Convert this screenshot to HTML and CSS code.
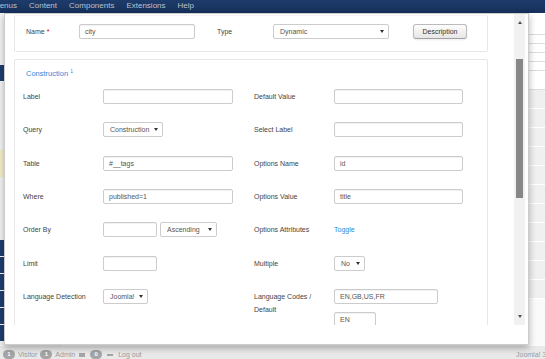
FILE: index.html
```html
<!DOCTYPE html>
<html>
<head>
	<title>Custom Field</title>
	<link rel="stylesheet" href="styles.css">
</head>
<body>
	<div class="topbar">
		<nav class="menu">
			<span>Menus</span>
			<span>Content</span>
			<span>Components</span>
			<span>Extensions</span>
			<span>Help</span>
		</nav>
	</div>

	<div class="page">
		<aside class="sidebar">
			<div class="side light h52"></div>
			<div class="side navy h17"></div>
			<div class="side light h68"></div>
			<div class="side yellow h27"></div>
			<div class="side light h63"></div>
			<div class="side navy h17"></div>
			<div class="side navy h17"></div>
			<div class="side navy h17"></div>
			<div class="side navy h17"></div>
			<div class="side navy h17"></div>
			<div class="side navy h17"></div>
		</aside>
		<main class="main">
			<div class="main-head"></div>
			<div class="thin-row"></div>
			<div class="thin-row"></div>
			<div class="thin-row"></div>
			<div class="thin-row"></div>
			<div class="thin-row tall"></div>
			<div class="list-row"></div>
			<div class="list-row"></div>
			<div class="list-row"></div>
			<div class="list-row"></div>
			<div class="list-row"></div>
			<div class="list-row"></div>
			<div class="list-row"></div>
			<div class="list-row"></div>
			<div class="list-row"></div>
			<div class="list-row"></div>
			<div class="list-row"></div>
		</main>
	</div>

	<footer class="status">
		<div class="status-left">
			<span class="badge">1</span><span>Visitor</span>
			<span class="badge">1</span><span>Admin</span>
			<span class="mail"></span>
			<span class="badge">0</span>
			<span class="dash"></span>
			<span>Log out</span>
		</div>
		<div class="status-right">Joomla! 3.4.8 — © 2016 Site</div>
	</footer>

	<div class="modal">
		<div class="frame">
			<div class="scroller">
				<div class="box box-head">
					<label class="head-label name-label">Name <span class="star">*</span></label>
					<div class="input w116">city</div>
					<label class="head-label type-label">Type</label>
					<div class="select w116"><span>Dynamic</span><i class="caret"></i></div>
					<button class="btn">Description</button>
				</div>

				<div class="box box-main">
					<div class="legend">Construction <sup>1</sup></div>
					<div class="fields">
						<label>Label</label>
						<div><div class="input w130"></div></div>
						<label>Default Value</label>
						<div><div class="input w129"></div></div>

						<label>Query</label>
						<div><div class="select w60"><span>Construction</span><i class="caret"></i></div></div>
						<label>Select Label</label>
						<div><div class="input w129"></div></div>

						<label>Table</label>
						<div><div class="input w130">#__tags</div></div>
						<label>Options Name</label>
						<div><div class="input w129">id</div></div>

						<label>Where</label>
						<div><div class="input w130">published=1</div></div>
						<label>Options Value</label>
						<div><div class="input w129">title</div></div>

						<label>Order By</label>
						<div class="inline">
							<div class="input w54"></div>
							<div class="select w57"><span>Ascending</span><i class="caret"></i></div>
						</div>
						<label>Options Attributes</label>
						<div><a class="toggle">Toggle</a></div>

						<label>Limit</label>
						<div><div class="input w54"></div></div>
						<label>Multiple</label>
						<div><div class="select w31"><span>No</span><i class="caret"></i></div></div>

						<label>Language Detection</label>
						<div><div class="select w45"><span>Joomla!</span><i class="caret"></i></div></div>
						<label>Language Codes /<br>Default</label>
						<div class="stack">
							<div class="input w104">EN,GB,US,FR</div>
							<div class="input w42">EN</div>
						</div>
					</div>
				</div>
			</div>

			<div class="scrollbar">
				<div class="sb-btn"><i class="arrow up"></i></div>
				<div class="sb-track"><div class="sb-thumb"></div></div>
				<div class="sb-btn"><i class="arrow down"></i></div>
			</div>
		</div>
	</div>
</body>
</html>
```

FILE: styles.css
```css
* {
	margin: 0;
	padding: 0;
	box-sizing: border-box;
}

body {
	width: 545px;
	height: 359px;
	overflow: hidden;
	background: #ececec;
	font-family: "Liberation Sans", Arial, sans-serif;
	font-size: 7px;
	color: #333;
	position: relative;
}

/* top navigation */
.topbar {
	height: 13px;
	background: linear-gradient(#1d3b6b, #16305a);
	overflow: hidden;
}

.menu {
	display: flex;
	gap: 12px;
	margin-left: -7px;
	font-size: 8px;
	line-height: 12px;
	color: #b9c1cf;
	white-space: nowrap;
}

/* page behind the modal */
.page {
	display: flex;
	height: 333px;
}

.sidebar {
	width: 60px;
	background: #f3f3f3;
	border-right: 1px solid #ddd;
}

.side.light { background: #f5f5f5; }
.side.navy { background: #1f3e6e; border-bottom: 1px solid #fff; }
.side.yellow { background: #f6f1c9; }
.h52 { height: 52px; }
.h17 { height: 17px; }
.h68 { height: 68px; }
.h27 { height: 27px; }
.h63 { height: 63px; }

.main {
	flex: 1;
	background: #fafafa;
}

.main-head {
	height: 22px;
	background: #fff;
	border-bottom: 1px solid #ddd;
}

.thin-row {
	height: 9px;
	border-bottom: 1px solid #ddd;
	background: #fff;
}

.thin-row.tall {
	height: 19px;
}

.list-row {
	height: 19px;
	background: #f0f0f0;
	border-bottom: 1px solid #fff;
}

/* status bar */
.status {
	display: grid;
	grid-template-columns: 516px 1fr;
	height: 13px;
	padding-top: 4px;
	background: #e9e9e9;
	color: #9a9a9a;
	white-space: nowrap;
	align-items: center;
}

.status-left {
	display: flex;
	align-items: center;
	gap: 3px;
	padding-left: 3px;
}

.badge {
	display: inline-block;
	min-width: 12px;
	height: 9px;
	line-height: 9px;
	padding: 0 3px;
	border-radius: 5px;
	background: #a5a5a5;
	color: #fff;
	font-size: 6px;
	font-weight: bold;
	text-align: center;
}

.mail {
	width: 6px;
	height: 4px;
	background: #a5a5a5;
	margin: 0 2px 0 1px;
}

.dash {
	width: 6px;
	height: 2px;
	background: #a5a5a5;
	margin: 0 2px;
}

/* modal */
.modal {
	position: absolute;
	left: 4px;
	top: 13px;
	width: 525px;
	height: 332px;
	background: #fff;
	border: 1px solid rgba(0, 0, 0, 0.2);
	box-shadow: 0 3px 7px rgba(0, 0, 0, 0.3);
}

.frame {
	display: flex;
	height: 311px;
}

.scroller {
	flex: 1;
	overflow: hidden;
	padding: 1px 26px 0 9px;
}

.box {
	border: 1px solid #e6e6e6;
	border-radius: 2px;
}

.box-head {
	display: flex;
	align-items: center;
	padding: 8px 0 12px 11px;
	border-top-color: #f4f4f4;
}

.head-label {
	color: #444;
}

.name-label { width: 53px; }
.type-label { width: 56px; margin-left: 22px; }

.star {
	color: #c00;
}

.btn {
	margin-left: 24px;
	width: 54px;
	height: 15px;
	font-family: inherit;
	font-size: 7px;
	color: #333;
	background: linear-gradient(#fdfdfd, #e6e6e6);
	border: 1px solid #bbb;
	border-bottom-color: #a2a2a2;
	border-radius: 3px;
	box-shadow: 0 1px 2px rgba(0, 0, 0, 0.08);
}

.box-main {
	margin-top: 7px;
	padding: 6px 0 30px 8px;
}

.legend {
	padding-left: 3px;
	line-height: 10px;
	font-size: 7.5px;
	color: #2a8ad9;
	margin-bottom: 10px;
}

.legend sup {
	font-size: 5px;
	vertical-align: 3px;
}

.fields {
	display: grid;
	grid-template-columns: 80px 151px 80px 1fr;
	row-gap: 18.33px;
	align-items: start;
}

.fields label {
	line-height: 13px;
	padding-top: 1px;
	color: #444;
}

.inline {
	display: flex;
	gap: 3px;
}

.stack {
	display: flex;
	flex-direction: column;
	gap: 8px;
}

.input,
.select {
	height: 15px;
	border: 1px solid #ccc;
	border-radius: 2px;
	background: #fff;
	line-height: 13px;
	padding: 0 5px;
	color: #555;
	white-space: nowrap;
	box-shadow: inset 0 1px 1px rgba(0, 0, 0, 0.06);
}

.select {
	display: flex;
	align-items: center;
	justify-content: space-between;
	padding: 0 4px 0 6px;
	box-shadow: none;
}

.caret {
	width: 0;
	height: 0;
	border-left: 2px solid transparent;
	border-right: 2px solid transparent;
	border-top: 3px solid #333;
}

.toggle {
	display: block;
	line-height: 15px;
	color: #2a8ad9;
}

.w116 { width: 116px; }
.w130 { width: 130px; }
.w129 { width: 129px; }
.w60 { width: 60px; }
.w54 { width: 54px; }
.w57 { width: 57px; }
.w31 { width: 31px; }
.w45 { width: 45px; }
.w104 { width: 104px; }
.w42 { width: 42px; }

/* fake scrollbar */
.scrollbar {
	width: 11px;
	margin-right: 3px;
	background: #f1f1f1;
	display: flex;
	flex-direction: column;
}

.sb-btn {
	height: 17px;
	display: flex;
	align-items: center;
	justify-content: center;
}

.arrow {
	width: 0;
	height: 0;
	border-left: 2px solid transparent;
	border-right: 2px solid transparent;
}

.arrow.up { border-bottom: 3px solid #505050; }
.arrow.down { border-top: 3px solid #505050; }

.sb-track {
	flex: 1;
	padding: 0 2px;
}

.sb-thumb {
	margin-top: 28px;
	height: 139px;
	background: #878787;
}
```
